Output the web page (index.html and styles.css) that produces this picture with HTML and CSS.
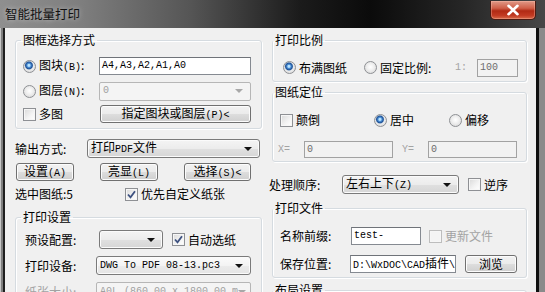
FILE: index.html
```html
<!DOCTYPE html>
<html lang="zh-CN">
<head>
<meta charset="utf-8">
<title>智能批量打印</title>
<link rel="stylesheet" href="styles.css">
</head>
<body>
<div class="window">
  <div class="titlebar">
    <div class="title">智能批量打印</div>
    <div class="close"><svg width="16" height="12" viewBox="0 0 16 12"><path d="M3.5 1.8 L12.5 10.2 M12.5 1.8 L3.5 10.2" stroke="#fff" stroke-width="2.6" stroke-linecap="round"/></svg></div>
  </div>
  <div class="frame">
    <div class="client">
      <div class="col col-left">
        <fieldset class="group">
          <legend>图框选择方式</legend>
          <div class="gbody gb-select">
            <div class="row r1">
              <span class="lab w76"><span class="radio on"></span><span class="t">图块<span class="m">(B)</span>:</span></span>
              <span class="input w152"><span class="m">A4,A3,A2,A1,A0</span></span>
            </div>
            <div class="row r2">
              <span class="lab w76"><span class="radio"></span><span class="t">图层<span class="m">(N)</span>:</span></span>
              <span class="combo disabled w152"><span class="m">0</span><i class="arrow"></i></span>
            </div>
            <div class="row r3">
              <span class="lab w76"><span class="check"></span><span class="t">多图</span></span>
              <span class="btn w151 ml1"><span class="t">指定图块或图层<span class="m">(P)&lt;</span></span></span>
            </div>
          </div>
        </fieldset>

        <div class="row out">
          <span class="lab w72">输出方式:</span>
          <span class="combo w173"><span class="t">打印<span class="m">PDF</span>文件</span><i class="arrow"></i></span>
        </div>

        <div class="row btns">
          <span class="btn b1"><span class="t">设置<span class="m">(A)</span></span></span>
          <span class="btn b2"><span class="t">亮显<span class="m">(L)</span></span></span>
          <span class="btn b3"><span class="t">选择<span class="m">(S)&lt;</span></span></span>
        </div>

        <div class="row sel">
          <span class="lab w110">选中图纸:5</span>
          <span class="check on"><svg width="11" height="11" viewBox="0 0 11 11"><path d="M2 5.5 L4.5 8.3 L9 2.2" fill="none" stroke="#3d5180" stroke-width="1.8"/></svg></span>
          <span class="ctext">优先自定义纸张</span>
        </div>

        <fieldset class="group g-print">
          <legend>打印设置</legend>
          <div class="gbody gb-print">
            <div class="row p1">
              <span class="lab w74">预设配置:</span>
              <span class="combo w64"><i class="arrow"></i></span>
              <span class="check on ml9"><svg width="11" height="11" viewBox="0 0 11 11"><path d="M2 5.5 L4.5 8.3 L9 2.2" fill="none" stroke="#3d5180" stroke-width="1.8"/></svg></span>
              <span class="ctext">自动选纸</span>
            </div>
            <div class="row p2">
              <span class="lab w71">打印设备:</span>
              <span class="combo light w155"><span class="m">DWG To PDF 08-13.pc3</span><i class="arrow"></i></span>
            </div>
            <div class="row p3">
              <span class="lab w71 gray">纸张大小:</span>
              <span class="combo disabled w155"><span class="m">A0L (860.00 x 1800.00 m</span><i class="arrow"></i></span>
            </div>
          </div>
        </fieldset>
      </div>

      <div class="col col-right">
        <fieldset class="group rg">
          <legend>打印比例</legend>
          <div class="gbody gb-scale">
            <div class="row s1">
              <span class="lab w81"><span class="radio on"></span><span class="t">布满图纸</span></span>
              <span class="lab w91"><span class="radio"></span><span class="t">固定比例:</span></span>
              <span class="lab w22 gray"><span class="m">1:</span></span>
              <span class="input disabled w41"><span class="m">100</span></span>
            </div>
          </div>
        </fieldset>

        <fieldset class="group rg g-pos">
          <legend>图纸定位</legend>
          <div class="gbody gb-pos">
            <div class="row q1">
              <span class="lab w94"><span class="check"></span><span class="t">颠倒</span></span>
              <span class="lab w75"><span class="radio on"></span><span class="t">居中</span></span>
              <span class="lab"><span class="radio"></span><span class="t">偏移</span></span>
            </div>
            <div class="row q2">
              <span class="lab w26 gray"><span class="m">X=</span></span>
              <span class="input disabled w89"><span class="m">0</span></span>
              <span class="lab w26 gray ml9"><span class="m">Y=</span></span>
              <span class="input disabled w89"><span class="m">0</span></span>
            </div>
          </div>
        </fieldset>

        <div class="row order">
          <span class="lab w73">处理顺序:</span>
          <span class="combo w117"><span class="t">左右上下<span class="m">(Z)</span></span><i class="arrow"></i></span>
          <span class="check ml9"></span>
          <span class="ctext">逆序</span>
        </div>

        <fieldset class="group rg g-file">
          <legend>打印文件</legend>
          <div class="gbody gb-file">
            <div class="row f1">
              <span class="lab w71">名称前缀:</span>
              <span class="input w70"><span class="m">test-</span></span>
              <span class="check disabled ml8"></span>
              <span class="ctext gray">更新文件</span>
            </div>
            <div class="row f2">
              <span class="lab w70">保存位置:</span>
              <span class="input w106"><span class="t"><span class="m">D:\WxDOC\CAD</span>插件<span class="m">\</span></span></span>
              <span class="btn w52 ml9"><span class="t">浏览</span></span>
            </div>
          </div>
        </fieldset>

        <fieldset class="group rg g-layout">
          <legend>布局设置</legend>
          <div class="gbody"></div>
        </fieldset>
      </div>
    </div>
  </div>
</div>
</body>
</html>
```

FILE: styles.css
```css
* { box-sizing: border-box; }
html, body { margin: 0; padding: 0; }
body {
  width: 545px; height: 292px; overflow: hidden;
  font-family: "Noto Sans CJK SC", "Microsoft YaHei", sans-serif;
  font-size: 12px; color: #000; background: #f0f0f0;
}
.window { width: 545px; height: 292px; display: flex; flex-direction: column; overflow: hidden; }

.titlebar {
  flex: none; height: 28px; display: flex; justify-content: space-between; align-items: flex-start;
  background: linear-gradient(90deg, #8f8f8f 0%, #7e7e7e 15%, #555555 35%, #1b1b1b 55%, #0b0b0b 68%, #262626 85%, #474747 100%);
}
.title {
  padding: 5px 0 0 5px; font-size: 12.5px; line-height: 18px; color: #101010;
  text-shadow: 0 0 5px rgba(255,255,255,.55);
}
.close {
  width: 46px; height: 19px; margin: 1px 9px 0 0;
  display: flex; align-items: center; justify-content: center;
  border: 1px solid #4a1a12; border-top: none; border-radius: 0 0 5px 5px;
  background: linear-gradient(#e09a88 0%, #cf5f48 40%, #b12a14 55%, #c23a22 80%, #d86a4a 100%);
  box-shadow: inset 0 0 0 1px rgba(255,200,180,.35);
}

.frame {
  flex: 1; display: flex; min-height: 0;
  background: linear-gradient(90deg, #c6c6c6 0 1px, #7e7e7e 1px 3px, #1e1e1e 3px 5px, #f0f0f0 5px 536px, #101010 536px 539px, #8a8a8a 539px);
  padding: 0 9px 0 5px;
}
.client {
  flex: 1; display: flex; gap: 7px; padding: 4px 8px 0 10px;
  background: #f0f0f0; overflow: hidden;
}
.col { display: flex; flex-direction: column; flex: none; }
.col-left { width: 247px; }
.col-right { width: 259px; }

.group {
  margin: 0; padding: 0; min-width: 0; flex: none;
  border: 1px solid #d5dbe0; border-radius: 3px;
  box-shadow: inset 1px 1px 0 #fff, 1px 1px 0 #fff;
}
.group legend { padding: 0 2px; margin-left: 5px; line-height: 16px; height: 16px; }
.col-right .rg { margin-left: 3px; width: 255px; }
.col-right .rg legend { margin-left: 0; }

.row { display: flex; align-items: center; flex: none; }
.lab { display: flex; align-items: center; white-space: nowrap; flex: none; line-height: 16px; }
.t { white-space: nowrap; line-height: 16px; }
.gray { color: #a3a3a3; }
.m { font-family: "Liberation Mono", monospace; font-size: 10px; }

.w22 { width: 22px; } .w26 { width: 26px; } .w41 { width: 41px; } .w52 { width: 52px; }
.w64 { width: 64px; } .w70 { width: 70px; } .w71 { width: 71px; } .w72 { width: 72px; }
.w73 { width: 73px; } .w74 { width: 74px; } .w75 { width: 75px; } .w76 { width: 76px; }
.w81 { width: 81px; } .w89 { width: 89px; } .w91 { width: 91px; } .w94 { width: 94px; }
.w106 { width: 106px; } .w110 { width: 110px; } .w117 { width: 117px; } .w151 { width: 151px; }
.w152 { width: 152px; } .w155 { width: 155px; } .w173 { width: 173px; }
.ml1 { margin-left: 1px; } .ml8 { margin-left: 8px; } .ml9 { margin-left: 9px; }

.radio {
  flex: none; width: 13px; height: 13px; margin-right: 3px; border-radius: 50%;
  border: 1px solid #8e9094;
  background: radial-gradient(circle at 50% 45%, #ffffff 0%, #f0f0f0 40%, #d3d3d3 100%);
}
.radio.on {
  background:
    radial-gradient(circle at 45% 40%, #b9e3ff 0 1px, #4b90d6 2px, #1f4f94 3.4px, #8aa7c8 4px, transparent 4.6px),
    radial-gradient(circle at 50% 45%, #ffffff 0%, #f0f0f0 40%, #d3d3d3 100%);
}
.check {
  flex: none; width: 13px; height: 13px; margin-right: 3px;
  border: 1px solid #8e9094;
  background: linear-gradient(135deg, #d9d9d9 0%, #f4f4f4 60%, #ffffff 100%);
  box-shadow: inset 0 0 0 1px #f6f6f6;
  display: flex; align-items: center; justify-content: center;
}
.check svg { display: block; }
.check.disabled { border-color: #bdbdbd; background: #f4f4f4; }
.ctext { line-height: 16px; white-space: nowrap; }

.input {
  flex: none; height: 18px; display: flex; align-items: center; padding-left: 2px;
  background: #fff; border: 1px solid #858a91; border-top-color: #6f7379;
  white-space: nowrap; overflow: hidden; line-height: 16px;
}
.input.disabled { background: #f2f2f2; border-color: #a2a2a2; color: #6d6d6d; }

.combo {
  flex: none; height: 19px; display: flex; align-items: center; padding: 0 7px 0 3px;
  border: 1px solid #7a7a7a; border-radius: 3px; white-space: nowrap; overflow: hidden;
  background: linear-gradient(#f4f4f4 0%, #ececec 50%, #e0e0e0 51%, #d6d6d6 100%);
  box-shadow: inset 0 0 0 1px #fbfbfb; line-height: 16px;
}
.combo.light { background: linear-gradient(#fbfbfb 0%, #f3f3f3 50%, #ebebeb 51%, #e4e4e4 100%); }
.combo.disabled { border-color: #b6b6b6; background: #f4f4f4; color: #a0a0a0; box-shadow: none; border-radius: 2px; }
.arrow {
  margin-left: auto; width: 0; height: 0; flex: none;
  border-left: 4px solid transparent; border-right: 4px solid transparent; border-top: 4px solid #111;
}
.combo.disabled .arrow { border-top-color: #a8a8a8; }

.btn {
  flex: none; height: 18px; display: flex; align-items: center; justify-content: center;
  border: 1px solid #707070; border-radius: 3px; white-space: nowrap; line-height: 16px;
  background: linear-gradient(#f2f2f2 0%, #ebebeb 50%, #dddddd 51%, #cfcfcf 100%);
  box-shadow: inset 0 0 0 1px #fcfcfc;
}

/* left column */
.gb-select { padding: 9px 10px 5px 7px; }
.r1 { height: 18px; }
.r2 { height: 18px; margin-top: 7px; }
.r3 { height: 18px; margin-top: 5px; }
.out { margin-top: 10px; height: 19px; }
.btns { margin-top: 5px; height: 18px; }
.b1 { width: 58px; margin-left: 1px; }
.b2 { width: 58px; margin-left: 26px; }
.b3 { width: 67px; margin-left: 26px; }
.sel { margin-top: 5px; height: 16px; }
.col-left .g-print { margin-top: 7px; }
.gb-print { padding: 5px 10px 0 9px; }
.p1 { height: 19px; }
.p2 { height: 19px; margin-top: 7px; }
.p3 { height: 19px; margin-top: 7px; }

/* right column */
.gb-scale { padding: 10px 0 4px 10px; }
.s1 { height: 19px; }
.col-right .g-pos { margin-top: 2px; }
.gb-pos { padding: 11px 0 3px 5px; }
.q1 { height: 18px; margin-left: 2px; }
.q2 { height: 17px; margin-top: 12px; }
.q2 .input { height: 17px; }
.order { margin-top: 13px; height: 19px; }
.col-right .g-file { margin-top: 6px; }
.gb-file { padding: 11px 0 4px 7px; }
.f1 { height: 18px; }
.f2 { height: 18px; margin-top: 10px; }
.col-right .g-layout { margin-top: 4px; }
.g-layout .gbody { height: 20px; }
```
